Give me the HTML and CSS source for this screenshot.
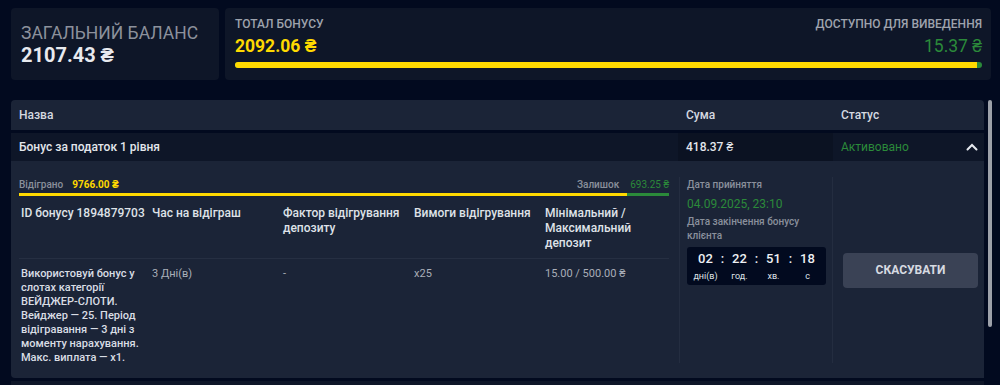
FILE: index.html
```html
<!DOCTYPE html>
<html lang="uk">
<head>
  <meta charset="UTF-8" />
  <meta name="viewport" content="width=device-width, initial-scale=1.0" />
  <title>Бонуси</title>
  <link rel="stylesheet" href="styles.css">
</head>
<body>

<div class="page">

  <!-- Balance summary -->
  <div class="summary">
    <div class="card balance">
      <div class="balance-label">Загальний баланс</div>
      <div class="balance-value">2107.43 ₴</div>
    </div>

    <div class="card bonus">
      <div class="bonus-top">
        <div>
          <div class="small-label">Тотал бонусу</div>
          <div class="bonus-value">2092.06 ₴</div>
        </div>
        <div class="right">
          <div class="small-label">Доступно для виведення</div>
          <div class="withdraw-value">15.37 ₴</div>
        </div>
      </div>
      <div class="bar">
        <div class="bar-fill"></div>
      </div>
    </div>
  </div>

  <!-- Bonus table -->
  <div class="table-wrap">
    <div class="table">
      <div class="row head">
        <div class="cell name">Назва</div>
        <div class="cell sum">Сума</div>
        <div class="cell status">Статус</div>
      </div>

      <div class="row item">
        <div class="cell name">Бонус за податок 1 рівня</div>
        <div class="cell sum dark">418.37 ₴</div>
        <div class="cell status">
          <span class="active">Активовано</span>
          <svg class="chevron" width="12" height="8" viewBox="0 0 12 8">
            <path d="M1.5 6.5 L6 2 L10.5 6.5" fill="none" stroke="#e6e9ef" stroke-width="2" stroke-linecap="round"/>
          </svg>
        </div>
      </div>

      <div class="details">
        <div class="wager">
          <div class="wager-top">
            <div><span class="muted">Відіграно</span><span class="played">9766.00 ₴</span></div>
            <div><span class="muted">Залишок</span><span class="left">693.25 ₴</span></div>
          </div>
          <div class="line">
            <div class="line-fill"></div>
          </div>

          <div class="grid grid-head">
            <div>ID бонусу 1894879703</div>
            <div>Час на відіграш</div>
            <div>Фактор відігрування депозиту</div>
            <div>Вимоги відігрування</div>
            <div>Мінімальний / Максимальний депозит</div>
          </div>
          <div class="grid grid-body">
            <div class="desc">Використовуй бонус у слотах категорії ВЕЙДЖЕР-СЛОТИ. Вейджер — 25. Період відігравання — 3 дні з моменту нарахування. Макс. виплата — х1.</div>
            <div>3 Дні(в)</div>
            <div>-</div>
            <div>x25</div>
            <div>15.00 / 500.00 ₴</div>
          </div>
        </div>

        <div class="dates">
          <div class="muted">Дата прийняття</div>
          <div class="accepted">04.09.2025, 23:10</div>
          <div class="muted expire">Дата закінчення бонусу клієнта</div>
          <div class="timer">
            <div class="unit"><b>02</b><span>дні(в)</span></div>
            <div class="colon">:</div>
            <div class="unit"><b>22</b><span>год.</span></div>
            <div class="colon">:</div>
            <div class="unit"><b>51</b><span>хв.</span></div>
            <div class="colon">:</div>
            <div class="unit"><b>18</b><span>с</span></div>
          </div>
        </div>

        <div class="actions">
          <button class="cancel">Скасувати</button>
        </div>
      </div>

      <div class="row item next"></div>
    </div>

    <div class="scroll-thumb"></div>
  </div>

</div>

</body>
</html>
```

FILE: styles.css
```css
/* General */
html, body {
  height: 385px;
  overflow: hidden;
}

body {
  margin: 0;
  background-color: #020a1f;
  font-family: Roboto, "Liberation Sans", sans-serif;
  color: #e3e6ec;
}

.page {
  padding: 8px 0 0 11px;
  height: 385px;
  box-sizing: border-box;
  overflow: hidden;
}

/* Summary cards */
.summary {
  display: flex;
  gap: 6px;
  width: 980px;
}

.card {
  background-color: #0e1628;
  border-radius: 4px;
  height: 72px;
  box-sizing: border-box;
}

.balance {
  width: 208px;
  padding: 15px 10px;
}

.balance-label {
  font-size: 17.5px;
  line-height: 20px;
  text-transform: uppercase;
  color: #8c919c;
}

.balance-value {
  font-size: 20px;
  line-height: 24px;
  font-weight: 700;
  color: #e8eaef;
}

.bonus {
  flex: 1;
  padding: 9px 9px 0 10px;
}

.bonus-top {
  display: flex;
  justify-content: space-between;
}

.right {
  text-align: right;
}

.small-label {
  font-size: 12px;
  line-height: 14px;
  font-weight: 500;
  text-transform: uppercase;
  color: #9ea3ad;
}

.bonus-value {
  font-size: 17.5px;
  line-height: 22px;
  margin-top: 4px;
  font-weight: 700;
  color: #ffd900;
}

.withdraw-value {
  font-size: 17.5px;
  line-height: 22px;
  margin-top: 4px;
  color: #2b8a3a;
}

.bar {
  height: 6px;
  margin-top: 5px;
  border-radius: 3px;
  background-color: #2b8a3a;
}

.bar-fill {
  width: 99.3%;
  height: 100%;
  border-radius: 3px 0 0 3px;
  background-color: #ffd900;
}

/* Table */
.table-wrap {
  position: relative;
  margin-top: 20px;
  width: 981px;
}

.table {
  width: 973px;
}

.row {
  display: flex;
  font-size: 12px;
  font-weight: 500;
}

.head {
  height: 30px;
  background-color: #1b2437;
  border-radius: 4px 4px 0 0;
  color: #d5d9e0;
  margin-bottom: 3px;
}

.item {
  height: 28px;
  background-color: #0e1628;
  color: #e3e6ec;
}

.cell {
  display: flex;
  align-items: center;
  padding: 0 8px;
  box-sizing: border-box;
}

.cell.name {
  width: 667px;
}

.cell.sum {
  width: 155px;
}

.cell.status {
  flex: 1;
  justify-content: space-between;
  padding-right: 6px;
}

.cell.dark {
  background-color: #0b1222;
}

.active {
  color: #2b8a3a;
  font-weight: 400;
}

.chevron {
  display: block;
}

/* Expanded details */
.details {
  display: flex;
  background-color: #1b2437;
  border-radius: 0 0 0 4px;
  padding: 16px 0 15px;
  height: 186px;
}

.wager {
  width: 650px;
  margin: 0 10px 0 8px;
}

.wager-top {
  display: flex;
  justify-content: space-between;
  font-size: 10px;
  line-height: 14px;
  padding-top: 1px;
}

.muted {
  color: #8a909c;
  font-size: 10px;
  line-height: 14px;
  font-weight: 500;
}

.played {
  color: #ffd900;
  font-weight: 700;
  margin-left: 9px;
}

.left {
  color: #2b8a3a;
  margin-left: 11px;
}

.line {
  height: 3px;
  margin-top: 1px;
  background-color: #2b8a3a;
}

.line-fill {
  width: 93.5%;
  height: 100%;
  background-color: #ffd900;
}

.grid {
  display: grid;
  grid-template-columns: repeat(5, 131px);
  padding-left: 2px;
}

.grid > div {
  padding-right: 10px;
}

.grid-head {
  font-size: 12px;
  line-height: 15px;
  font-weight: 500;
  color: #dfe2e8;
  padding-top: 10px;
  height: 52px;
  border-bottom: 1px solid #262f42;
}

.grid-head > div:first-child {
  padding-right: 0;
  white-space: nowrap;
}

.grid-body {
  font-size: 11px;
  line-height: 14px;
  color: #a9aeb8;
  padding-top: 8px;
}

.grid-body .desc {
  color: #d9dde4;
  font-weight: 500;
  padding-right: 10px;
}

.dates {
  width: 154px;
  box-sizing: border-box;
  border-left: 1px solid #242d40;
  border-right: 1px solid #242d40;
  padding: 1px 7px 0 7px;
}

.accepted {
  color: #2b8a3a;
  font-size: 12px;
  line-height: 16px;
  margin-top: 4px;
}

.expire {
  margin-top: 3px;
}

.timer {
  display: flex;
  margin-top: 4px;
  width: 139px;
  height: 38px;
  box-sizing: border-box;
  padding: 4px 5px 0;
  background-color: #020a1f;
  border-radius: 3px;
}

.unit {
  width: 27px;
  display: flex;
  flex-direction: column;
  align-items: center;
}

.unit b {
  font-size: 13px;
  line-height: 16px;
  font-weight: 500;
  color: #eef0f4;
}

.unit span {
  font-size: 9px;
  line-height: 12px;
  margin-top: 3px;
  color: #dfe2e8;
}

.colon {
  width: 7px;
  text-align: center;
  font-size: 13px;
  line-height: 15px;
  font-weight: 500;
  color: #eef0f4;
}

.actions {
  flex: 1;
  display: flex;
  align-items: center;
  padding: 0 6px 0 10px;
}

.cancel {
  width: 100%;
  height: 35px;
  border: none;
  border-radius: 4px;
  background-color: #3a4255;
  color: #d7dae1;
  font-family: Roboto, "Liberation Sans", sans-serif;
  font-size: 12px;
  font-weight: 700;
  text-transform: uppercase;
  cursor: pointer;
}

.next {
  margin-top: 3px;
}

/* Scrollbar thumb over the table edge */
.scroll-thumb {
  position: absolute;
  top: 0;
  right: 0;
  width: 4px;
  height: 227px;
  border-radius: 2px;
  background-color: #9da1a9;
}
```
